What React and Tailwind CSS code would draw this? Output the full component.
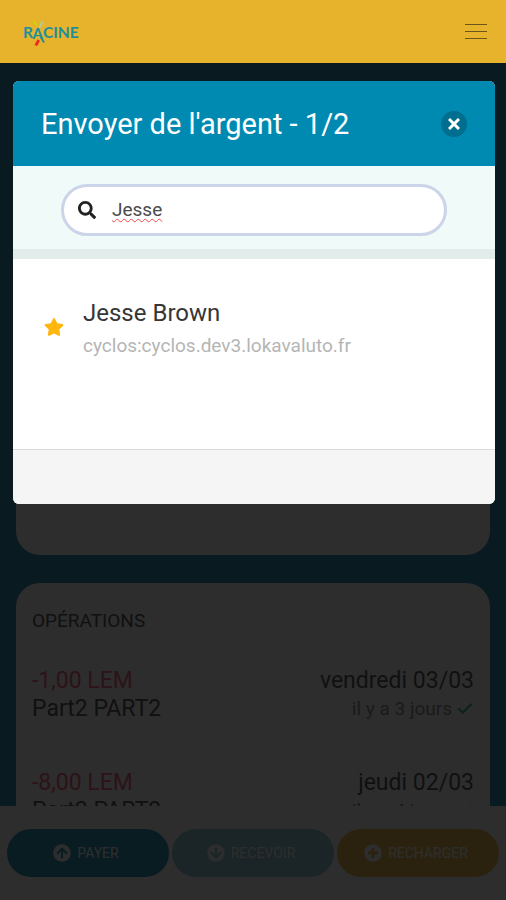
import React from "react";
import { useState } from "react";
import { Check } from "lucide-react";
import {
    FaArrowCircleDown,
    FaArrowCircleUp,
    FaPlusCircle,
    FaSearch,
    FaStar,
} from "react-icons/fa";

const operations = [
    { id: 1, amount: "-1,00 LEM", name: "Part2 PART2", date: "vendredi 03/03", ago: "il y a 3 jours" },
    { id: 2, amount: "-8,00 LEM", name: "Part2 PART2", date: "jeudi 02/03", ago: "il y a 4 jours" },
];

const contacts = [
    { id: 1, name: "Jesse Brown", account: "cyclos:cyclos.dev3.lokavaluto.fr" },
];

const Logo = () => (
    <svg width="60" height="30" viewBox="0 0 60 30" role="img" aria-label="Racine">
        <path d="M12.500 4l3.500 4.500" stroke="#cfd400" strokeWidth="2" />
        <path d="M21.500 4.500l-3 6" stroke="#a9cf9f" strokeWidth="2" />
        <path d="M17.800 23l-3 5.500" stroke="#ee2a1f" strokeWidth="2.800" />
        <path d="M19.500 19.500l3.500 6" stroke="#1c8f9c" strokeWidth="2" />
        <g fill="#1c8f9c" fontFamily="Lato, sans-serif" fontWeight="700">
            <text x="2" y="20.500" fontSize="15.500">R</text>
            <text x="11.500" y="22" fontSize="15">A</text>
            <text x="22" y="20.500" fontSize="15.500">CINE</text>
        </g>
    </svg>
);

const Header = () => (
    <header className="relative z-30 flex h-[63px] shrink-0 items-center justify-between bg-[#e7b32c] pl-[21px] pr-[18px]">
        <a href="#accueil">
            <Logo />
        </a>
        <button type="button" aria-label="Menu" className="flex w-6 flex-col items-center gap-[6px] py-2">
            <span className="h-px w-[22px] bg-[#6b5518]" />
            <span className="h-px w-[22px] bg-[#6b5518]" />
            <span className="h-px w-[22px] bg-[#6b5518]" />
        </button>
    </header>
);

const Operation = ({ op }) => (
    <li className="flex justify-between">
        <div>
            <p className="text-[23px] leading-7 text-[#f14668]">{op.amount}</p>
            <p className="text-[23px] leading-7 text-[#363636]">{op.name}</p>
        </div>
        <div className="text-right">
            <p className="text-[23px] leading-7 text-[#363636]">{op.date}</p>
            <p className="flex items-center justify-end gap-1 text-[19px] leading-7 text-[#7a7a7a]">
                {op.ago}
                <Check strokeWidth={3} className="size-[18px] text-[#00b88a]" />
            </p>
        </div>
    </li>
);

const ActionBar = () => (
    <footer className="flex h-[94px] shrink-0 items-center gap-[3px] bg-white px-[7px] text-sm text-white">
        <button type="button" className="flex h-12 flex-1 items-center justify-center gap-[6px] rounded-full bg-[#0085aa] pr-1">
            <FaArrowCircleUp className="size-[18px]" />
            PAYER
        </button>
        <button type="button" disabled className="flex h-12 flex-1 items-center justify-center gap-[6px] rounded-full bg-[#0085aa] pr-1 opacity-50">
            <FaArrowCircleDown className="size-[18px]" />
            RECEVOIR
        </button>
        <button type="button" className="flex h-12 flex-1 items-center justify-center gap-[6px] rounded-full bg-[#e7b32c] pr-1">
            <FaPlusCircle className="size-[18px]" />
            RECHARGER
        </button>
    </footer>
);

const SendMoneyModal = () => {
    const [search, setSearch] = useState("Jesse");
    const results = contacts.filter((c) => c.name.toLowerCase().includes(search.toLowerCase()));

    return (
        <div className="fixed inset-0 z-20 bg-[#0a0a0a]/86 pt-[81px] pr-[11px] pl-[13px]">
            <div role="dialog" aria-labelledby="modal-title" className="overflow-hidden rounded-md bg-white">
                <div className="flex h-[85px] items-center justify-between bg-[#008ab1] px-7">
                    <h2 id="modal-title" className="text-[29px] leading-9 text-white">
                        Envoyer de l'argent - 1/2
                    </h2>
                    <button type="button" aria-label="Fermer" className="flex size-[26px] items-center justify-center rounded-full bg-[#006e8e]">
                        <svg width="12" height="12" viewBox="0 0 12 12" stroke="#fff" strokeWidth="3">
                            <path d="M1 1l10 10M11 1L1 11" />
                        </svg>
                    </button>
                </div>

                <div className="border-b-[10px] border-[#e2ecea] bg-[#effaf9] px-12 pt-[18px] pb-[13px]">
                    <label className="flex h-[52px] items-center gap-4 rounded-full border-[3px] border-[#ccd4e9] bg-white px-[14px]">
                        <FaSearch className="size-[18px] shrink-0 text-[#222]" />
                        <input
                            type="text"
                            aria-label="Rechercher"
                            spellCheck={false}
                            value={search}
                            onChange={(e) => setSearch(e.target.value)}
                            className="w-full min-w-0 bg-transparent text-[19px] text-[#4a4a4a] underline decoration-[#f04a4a] decoration-wavy decoration-1 underline-offset-2 outline-none"
                        />
                    </label>
                </div>

                <ul className="min-h-[190px] px-[31px] pt-10">
                    {results.map((c) => (
                        <li key={c.id} className="flex items-start gap-[19px]">
                            <FaStar className="mt-[18px] size-5 shrink-0 text-[#ffb70f]" />
                            <div>
                                <p className="text-2xl leading-7 text-[#363636]">{c.name}</p>
                                <p className="text-[19px] leading-[38px] text-[#b5b5b5]">{c.account}</p>
                            </div>
                        </li>
                    ))}
                </ul>

                <div className="h-[55px] border-t border-[#dbdbdb] bg-[#f5f5f5]" />
            </div>
        </div>
    );
};

const App = () => {
    return (
        <div className="flex h-screen flex-col overflow-hidden bg-[#0079a0] font-['Roboto',sans-serif]">
            <Header />
            <main className="flex min-h-0 flex-1 flex-col gap-7 overflow-hidden px-4 pt-7">
                <section className="h-[464px] shrink-0 rounded-3xl bg-white" />
                <section className="shrink-0 rounded-3xl bg-white px-4 pt-6 pb-10">
                    <h2 className="text-[19px] leading-7 text-[#363636]">OPÉRATIONS</h2>
                    <ul className="mt-8 flex flex-col gap-[46px]">
                        {operations.map((op) => (
                            <Operation key={op.id} op={op} />
                        ))}
                    </ul>
                </section>
            </main>
            <ActionBar />
            <SendMoneyModal />
        </div>
    );
};

export default App;
